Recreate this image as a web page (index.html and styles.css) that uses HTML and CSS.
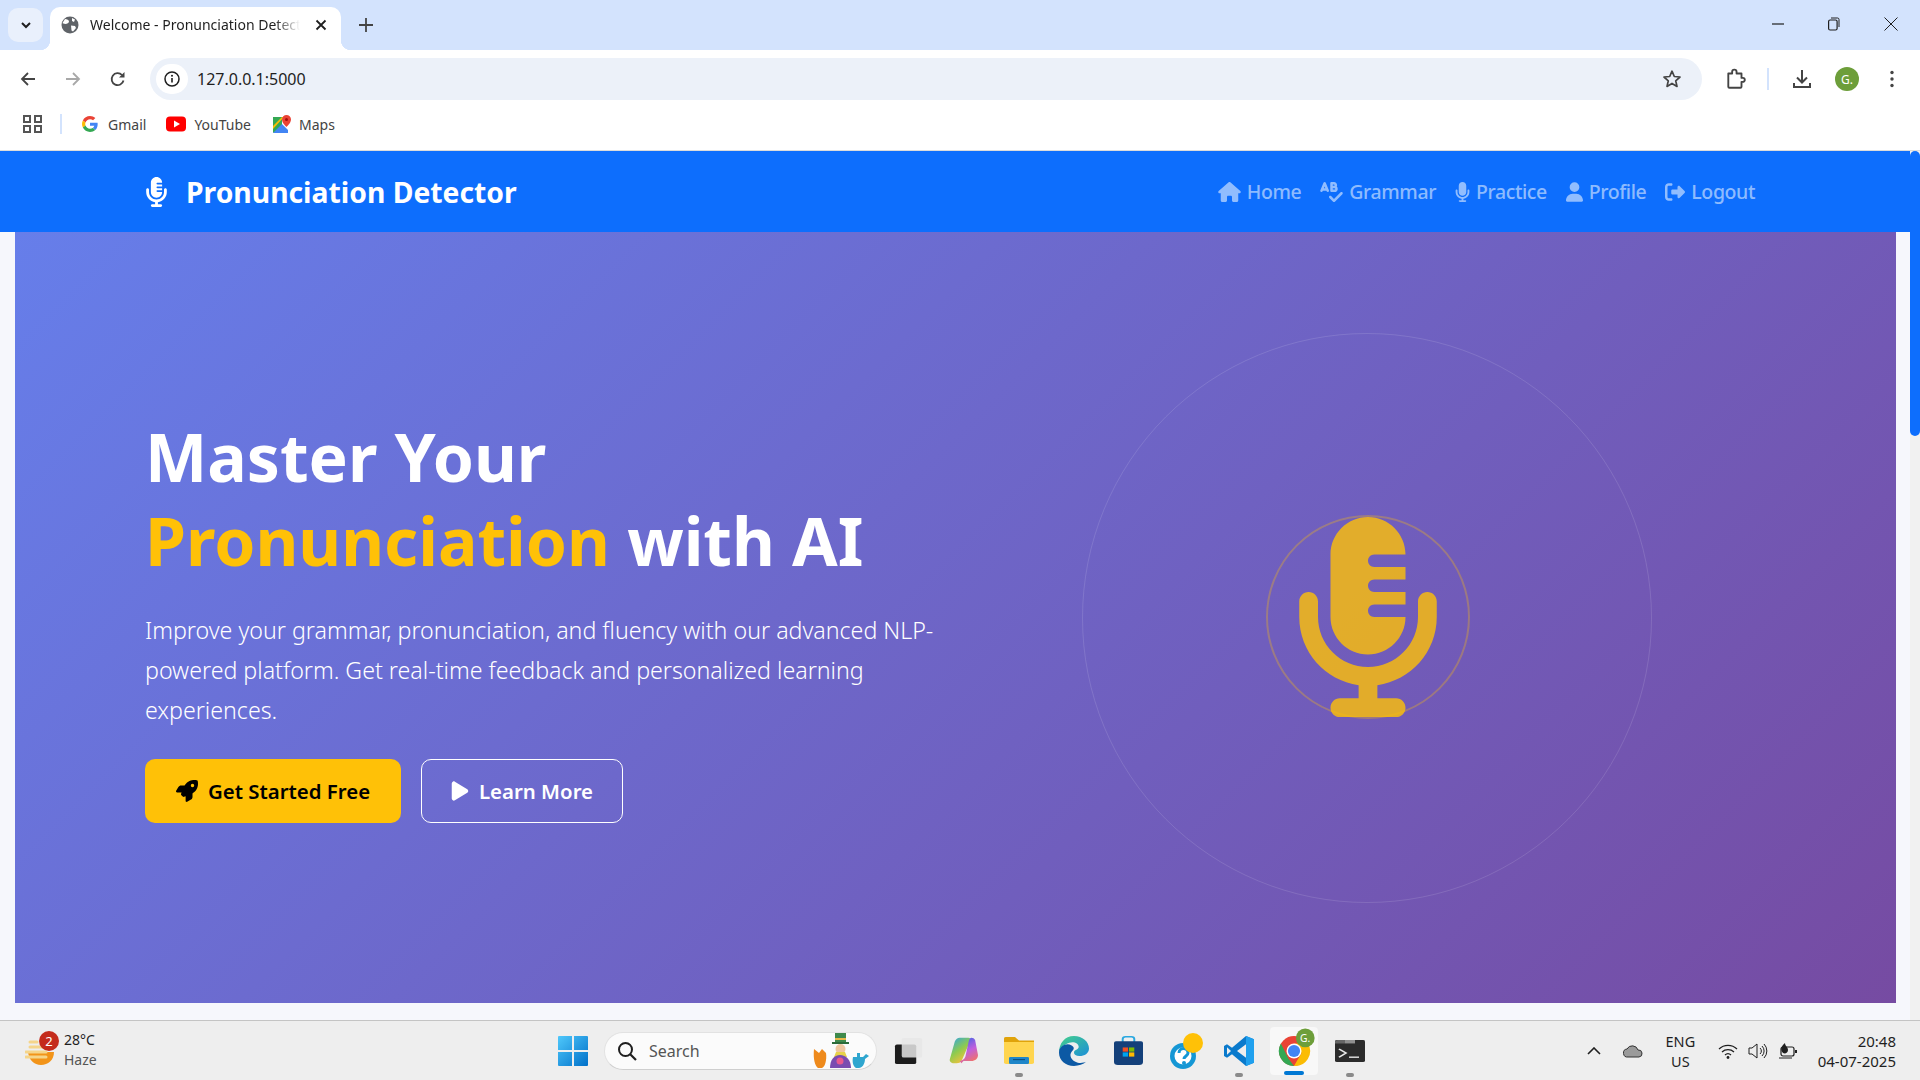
FILE: index.html
```html
<!DOCTYPE html>
<html lang="en">
<head>
<meta charset="utf-8">
<title>Welcome - Pronunciation Detector</title>
<link rel="stylesheet" href="styles.css">
</head>
<body>
<svg class="defs" aria-hidden="true">
  <symbol id="i-mic" viewBox="0 0 384 512"><path d="M96 96V256c0 53 43 96 96 96s96-43 96-96H208c-8.8 0-16-7.2-16-16s7.2-16 16-16h80V192H208c-8.8 0-16-7.2-16-16s7.2-16 16-16h80V128H208c-8.8 0-16-7.2-16-16s7.2-16 16-16h80c0-53-43-96-96-96S96 43 96 96zM320 240v16c0 70.7-57.3 128-128 128s-128-57.3-128-128V216c0-13.3-10.7-24-24-24s-24 10.7-24 24v40c0 89.1 66.2 162.7 152 174.4V464H120c-13.3 0-24 10.7-24 24s10.7 24 24 24h72 72c13.3 0 24-10.7 24-24s-10.7-24-24-24H216V430.4c85.8-11.7 152-85.3 152-174.4V216c0-13.3-10.7-24-24-24s-24 10.7-24 24v24z"/></symbol>
  <symbol id="i-mic2" viewBox="0 0 384 512"><path d="M192 0C139 0 96 43 96 96V256c0 53 43 96 96 96s96-43 96-96V96c0-53-43-96-96-96zM64 216c0-13.3-10.7-24-24-24s-24 10.7-24 24v40c0 89.1 66.2 162.7 152 174.4V464H120c-13.3 0-24 10.7-24 24s10.7 24 24 24h144c13.3 0 24-10.7 24-24s-10.7-24-24-24H216V430.4c85.8-11.7 152-85.3 152-174.4V216c0-13.3-10.7-24-24-24s-24 10.7-24 24v40c0 70.7-57.3 128-128 128S64 326.7 64 256V216z"/></symbol>
</svg>

<div class="window">
  <header class="tabstrip">
    <div class="tab-search"><svg width="14" height="14" viewBox="0 0 14 14"><path d="M3 5l4 4 4-4" fill="none" stroke="#1f1f1f" stroke-width="2"/></svg></div>
    <div class="tab">
      <svg class="tab-globe" width="18" height="18" viewBox="0 0 18 18"><circle cx="9" cy="9" r="8.500" fill="#5f6368"/><path d="M4 3c2 0 4 1 4 2.500S6 8 4.500 8 1.500 7 1.500 7zM10 9.500l4 .5 1 2-3 3.500-1.500-1zM11 2l3 1.500-1 2.500-2-1z" fill="#fff"/></svg>
      <span class="tab-title">Welcome - Pronunciation Detector</span>
      <svg class="tab-close" width="12" height="12" viewBox="0 0 12 12"><path d="M1.500 1.500l9 9M10.500 1.500l-9 9" stroke="#1f1f1f" stroke-width="1.800"/></svg>
    </div>
    <svg class="tab-new" width="14" height="14" viewBox="0 0 14 14"><path d="M7 0v14M0 7h14" stroke="#444" stroke-width="1.800"/></svg>
    <div class="win-controls">
      <svg width="12" height="12" viewBox="0 0 12 12"><path d="M0 6h12" stroke="#1f1f1f" stroke-width="1.200"/></svg>
      <svg width="12" height="14" viewBox="0 0 12 14"><rect x=".6" y="3" width="8.500" height="10" rx="1.500" fill="none" stroke="#1f1f1f" stroke-width="1.200"/><path d="M3 1h6.500a1.500 1.500 0 0 1 1.500 1.500V10" fill="none" stroke="#1f1f1f"/></svg>
      <svg width="14" height="14" viewBox="0 0 14 14"><path d="M.5.500l13 13M13.500.500l-13 13" stroke="#1f1f1f"/></svg>
    </div>
  </header>

  <div class="toolbar">
    <div class="nav-btns">
      <svg width="16" height="16" viewBox="0 0 16 16"><path d="M15 8H2M8 2L2 8l6 6" fill="none" stroke="#444" stroke-width="1.800"/></svg>
      <svg width="16" height="16" viewBox="0 0 16 16"><path d="M1 8h13M8 2l6 6-6 6" fill="none" stroke="#a8a8a8" stroke-width="1.800"/></svg>
      <svg width="16" height="16" viewBox="0 0 16 16"><path d="M13.500 9.500A6 6 0 1 1 12 4" fill="none" stroke="#444" stroke-width="1.800"/><path d="M14.500 1v5.500H9z" fill="#444"/></svg>
    </div>
    <div class="omnibox">
      <div class="site-info"><svg width="16" height="16" viewBox="0 0 16 16"><circle cx="8" cy="8" r="7" fill="none" stroke="#1f1f1f" stroke-width="1.500"/><path d="M8 7v4.500" stroke="#1f1f1f" stroke-width="1.600"/><circle cx="8" cy="4.800" r="1" fill="#1f1f1f"/></svg></div>
      <span class="url">127.0.0.1:5000</span>
      <svg class="star" width="20" height="20" viewBox="0 0 20 20"><path d="M10 2.200l2.300 5.300 5.700.5-4.300 3.800 1.300 5.600-5-3-5 3 1.300-5.600L2 8l5.700-.5z" fill="none" stroke="#444" stroke-width="1.700" stroke-linejoin="round"/></svg>
    </div>
    <div class="tool-icons">
      <svg class="t-puzzle" width="22" height="24" viewBox="0 0 20 20"><path d="M3 5h3.500V3.500a2 2 0 0 1 4 0V5H15v4h1.200a1.800 1.800 0 0 1 0 3.600H15V17a1 1 0 0 1-1 1H4a1 1 0 0 1-1-1z" fill="none" stroke="#444" stroke-width="1.700" stroke-linejoin="round"/></svg>
      <span class="t-sep"></span>
      <svg class="t-down" width="20" height="20" viewBox="0 0 20 20"><path d="M10 1v12M5 8.500l5 5 5-5" fill="none" stroke="#444" stroke-width="2"/><path d="M2 14v4h16v-4" fill="none" stroke="#444" stroke-width="2"/></svg>
      <span class="avatar">G.</span>
      <svg class="t-dots" width="4" height="18" viewBox="0 0 4 18"><circle cx="2" cy="2.500" r="1.700" fill="#444"/><circle cx="2" cy="9" r="1.700" fill="#444"/><circle cx="2" cy="15.500" r="1.700" fill="#444"/></svg>
    </div>
  </div>

  <div class="bookmarks">
    <svg class="apps" width="19" height="18" viewBox="0 0 19 18"><g fill="none" stroke="#555" stroke-width="2"><rect x="1" y="1" width="6" height="6"/><rect x="12" y="1" width="6" height="6"/><rect x="1" y="11" width="6" height="6"/><rect x="12" y="11" width="6" height="6"/></g></svg>
    <span class="bm-sep"></span>
    <div class="bm bm-g"><svg width="16" height="16" viewBox="0 0 48 48"><path fill="#EA4335" d="M24 9.500c3.500 0 6.700 1.200 9.200 3.600l6.900-6.900C35.900 2.400 30.500 0 24 0 14.600 0 6.500 5.400 2.600 13.200l8 6.200C12.500 13.700 17.800 9.500 24 9.500z"/><path fill="#4285F4" d="M47 24.500c0-1.600-.1-3.100-.4-4.500H24v9h12.900c-.6 3-2.200 5.500-4.700 7.200l7.700 6c4.500-4.200 7.100-10.300 7.100-17.700z"/><path fill="#FBBC05" d="M10.500 28.600c-.5-1.500-.8-3-.8-4.600s.3-3.100.8-4.600l-8-6.200C.9 16.500 0 20.100 0 24s.9 7.500 2.600 10.800z"/><path fill="#34A853" d="M24 48c6.500 0 11.900-2.100 15.900-5.800l-7.700-6c-2.200 1.400-4.900 2.300-8.200 2.300-6.200 0-11.500-4.200-13.400-9.900l-8 6.200C6.500 42.600 14.600 48 24 48z"/></svg><span>Gmail</span></div>
    <div class="bm bm-y"><svg width="20" height="16" viewBox="0 0 20 16"><rect width="20" height="15" y=".5" rx="4" fill="#f00"/><path d="M8 4.500v7l6-3.500z" fill="#fff"/></svg><span>YouTube</span></div>
    <div class="bm bm-m"><svg width="18" height="18" viewBox="0 0 18 18"><path d="M0 2h9v16H1a1 1 0 0 1-1-1z" fill="#34a853"/><path d="M0 18l9-9 6 6v3z" fill="#4285f4"/><path d="M0 11L9 2h2L0 14z" fill="#fbbc04"/><path d="M13.500 0a4.500 4.500 0 0 1 4.500 4.500C18 8 13.500 12 13.500 12S9 8 9 4.500A4.500 4.500 0 0 1 13.500 0z" fill="#ea4335"/><circle cx="13.500" cy="4.500" r="1.500" fill="#a50e0e"/></svg><span>Maps</span></div>
  </div>

  <div class="page-row">
    <div class="page">
      <nav class="navbar">
        <a class="brand"><svg class="brand-mic"><use href="#i-mic"/></svg><span>Pronunciation Detector</span></a>
        <ul class="nav-links">
          <li><svg class="ni ni-home" viewBox="0 0 576 512"><path d="M575.800 255.500c0 18-15 32.100-32 32.100h-32l.7 160.200c0 2.700-.2 5.400-.5 8.100V472c0 22.100-17.900 40-40 40H456c-1.100 0-2.200 0-3.300-.1c-1.400 .1-2.800 .1-4.200 .1H416 392c-22.100 0-40-17.900-40-40V448 384c0-17.700-14.300-32-32-32H256c-17.700 0-32 14.300-32 32v64 24c0 22.100-17.900 40-40 40H160 128.100c-1.500 0-3-.1-4.500-.2c-1.200 .1-2.400 .2-3.600 .2H104c-22.100 0-40-17.900-40-40V360c0-.9 0-1.900 .1-2.800V287.600H32c-18 0-32-14-32-32.100c0-9 3-17 10-24L266.400 8c7-7 15-8 22-8s15 2 21 7L564.800 231.500c8 7 12 15 11 24z"/></svg>Home</li>
          <li><svg class="ni ni-spell" viewBox="0 0 576 512"><path d="M112 0C99.100 0 87.400 7.800 82.500 19.700l-66.700 160-13.300 32c-6.800 16.300 .9 35 17.200 41.800s35-.9 41.800-17.200L66.700 224h90.700l5.100 12.300c6.800 16.300 25.500 24 41.800 17.200s24-25.500 17.200-41.800l-13.300-32-66.700-160C136.600 7.800 124.900 0 112 0zm18.700 160H93.300L112 115.200 130.700 160zM256 32v96 96c0 17.700 14.300 32 32 32h80c44.200 0 80-35.800 80-80c0-23.100-9.800-43.800-25.400-58.400c6-11.200 9.400-24 9.400-37.600c0-44.200-35.800-80-80-80H288c-17.700 0-32 14.300-32 32zm96 64H320V64h32c8.800 0 16 7.200 16 16s-7.200 16-16 16zm-32 64h32 16c8.800 0 16 7.200 16 16s-7.200 16-16 16H320V160zM566.600 310.600c12.500-12.500 12.500-32.800 0-45.300s-32.800-12.500-45.300 0L352 434.700l-73.400-73.400c-12.500-12.500-32.800-12.500-45.300 0s-12.500 32.800 0 45.300l96 96c12.500 12.500 32.800 12.500 45.300 0l192-192z"/></svg>Grammar</li>
          <li><svg class="ni ni-mic"><use href="#i-mic2"/></svg>Practice</li>
          <li><svg class="ni ni-user" viewBox="0 0 448 512"><path d="M224 256A128 128 0 1 0 224 0a128 128 0 1 0 0 256zm-45.700 48C79.800 304 0 383.800 0 482.300C0 498.700 13.300 512 29.700 512H418.300c16.400 0 29.700-13.300 29.700-29.700C448 383.800 368.200 304 269.700 304H178.300z"/></svg>Profile</li>
          <li><svg class="ni ni-out" viewBox="0 0 512 512"><path d="M377.900 105.900L500.700 228.700c7.200 7.200 11.300 17.100 11.300 27.300s-4.100 20.100-11.300 27.300L377.900 406.100c-6.400 6.400-15 9.900-24 9.900c-18.700 0-33.900-15.200-33.900-33.900l0-62.100-128 0c-17.700 0-32-14.300-32-32l0-64c0-17.700 14.300-32 32-32l128 0 0-62.100c0-18.700 15.200-33.900 33.900-33.900c9 0 17.600 3.600 24 9.900zM160 96L96 96c-17.700 0-32 14.300-32 32l0 256c0 17.700 14.300 32 32 32l64 0c17.700 0 32 14.300 32 32s-14.300 32-32 32l-64 0c-53 0-96-43-96-96L0 128C0 75 43 32 96 32l64 0c17.700 0 32 14.300 32 32s-14.300 32-32 32z"/></svg>Logout</li>
        </ul>
      </nav>
      <main class="main">
        <section class="hero">
          <div class="hero-copy">
            <h1>Master Your<br><span class="accent">Pronunciation</span> with AI</h1>
            <p>Improve your grammar, pronunciation, and fluency with our advanced NLP-powered platform. Get real-time feedback and personalized learning experiences.</p>
            <div class="cta">
              <a class="btn btn-primary"><svg class="btn-ic" viewBox="0 0 512 512"><path d="M156.600 384.900L125.700 354c-8.500-8.500-11.500-20.800-7.700-32.200c3-8.900 7-20.500 11.800-33.800L24 288c-8.600 0-16.600-4.600-20.900-12.100s-4.200-16.700 .2-24.100l52.500-88.500c13-21.900 36.500-35.300 61.900-35.300l82.300 0c2.400-4 4.800-7.700 7.200-11.300C289.100-4.100 411.100-8.100 483.900 5.300c11.600 2.100 20.600 11.200 22.800 22.800c13.400 72.900 9.300 194.800-111.400 276.700c-3.500 2.400-7.300 4.800-11.300 7.200v82.300c0 25.400-13.400 49-35.300 61.900l-88.500 52.500c-7.400 4.400-16.600 4.500-24.100 .2s-12.100-12.200-12.100-20.900V380.800c-14.100 4.900-26.400 8.900-35.700 11.900c-11.200 3.600-23.400 .5-31.800-7.800zM384 168a40 40 0 1 0 0-80 40 40 0 1 0 0 80z"/></svg>Get Started Free</a>
              <a class="btn btn-outline"><svg class="btn-ic btn-ic-play" viewBox="0 0 384 512"><path d="M73 39c-14.800-9.100-33.400-9.400-48.500-.9S0 62.600 0 80V432c0 17.400 9.400 33.400 24.500 41.900s33.700 8.100 48.500-.9L361 297c14.300-8.700 23-24.200 23-41s-8.700-32.200-23-41L73 39z"/></svg>Learn More</a>
            </div>
          </div>
          <div class="hero-art">
            <div class="ring ring-big"></div>
            <div class="ring ring-small"></div>
            <svg class="art-mic"><use href="#i-mic"/></svg>
          </div>
        </section>
      </main>
    </div>
    <div class="scroll-track"><div class="scroll-thumb"></div></div>
  </div>

  <footer class="taskbar">
    <div class="weather">
      <div class="weather-icon">
        <svg width="30" height="30" viewBox="0 0 30 30"><path d="M3 16h26c0 8-6 13-13 13S4 24 3 16z" fill="#f29419"/><path d="M5 6h7M5 11h12M1 16h20M1 21h20" stroke="#f5d58a" stroke-width="3" stroke-linecap="round"/></svg>
        <span class="badge">2</span>
      </div>
      <div class="weather-text"><span>28°C</span><span class="muted">Haze</span></div>
    </div>
    <svg class="win-logo" width="30" height="30" viewBox="0 0 30 30"><defs><linearGradient id="w" x1="0" y1="0" x2="1" y2="1"><stop offset="0" stop-color="#4fc8fb"/><stop offset="1" stop-color="#0070c9"/></linearGradient></defs><path d="M1 0h13v14H0V1a1 1 0 0 1 1-1zM16 0h13a1 1 0 0 1 1 1v13H16zM0 16h14v14H1a1 1 0 0 1-1-1zM16 16h14v13a1 1 0 0 1-1 1H16z" fill="url(#w)"/></svg>
    <div class="search">
      <svg width="20" height="20" viewBox="0 0 20 20"><circle cx="8.500" cy="8.500" r="6.500" fill="none" stroke="#1f1f1f" stroke-width="2"/><path d="M13 13l6 6" stroke="#1f1f1f" stroke-width="2.200"/></svg>
      <span>Search</span>
      <svg class="doodle" width="56" height="36" viewBox="0 0 56 36"><path d="M1 16l5 4 3-4 4 4c1 7-1 14-4 15H5c-3-2-5-9-4-19z" fill="#ee8a1c"/><path d="M22 0h11v9H22z" fill="#3f8a4c"/><path d="M22 5h11v2H22z" fill="#e8b84a"/><path d="M19 9h17v2H19z" fill="#2d6b3a"/><circle cx="27.500" cy="16" r="5" fill="#f0c7a0"/><path d="M23 19l-2 5h13l-2-5z" fill="#e8d24a"/><path d="M17 35c0-8 4-13 10-13s11 5 11 13z" fill="#7a4bb0"/><circle cx="27" cy="28" r="3.500" fill="#e8598f"/><path d="M40 24h10l3-3 3 2-4 3c0 5-3 9-6 9h-3c-3-2-4-6-3-11z" fill="#2fa6cf"/><path d="M44 20h3v4h-3z" fill="#2fa6cf"/></svg>
    </div>
    <div class="apps-row">
      <div class="task"><svg width="29" height="28" viewBox="0 0 30 30" preserveAspectRatio="none"><rect x="1" y="8" width="22" height="21" rx="2" fill="#1c1c1c"/><rect x="8" y="1" width="21" height="21" rx="2" fill="#e6e6e6" fill-opacity=".85"/></svg></div>
      <div class="task"><svg width="29" height="27" viewBox="0 0 30 36" preserveAspectRatio="none"><defs><linearGradient id="cp" x1="0" y1="0" x2=".6" y2="1"><stop offset="0" stop-color="#2aa3ee"/><stop offset=".55" stop-color="#8ecb4e"/><stop offset="1" stop-color="#f6c13c"/></linearGradient><linearGradient id="cp2" x1=".3" y1="0" x2=".7" y2="1"><stop offset="0" stop-color="#4463e6"/><stop offset=".5" stop-color="#c060dc"/><stop offset="1" stop-color="#f6745c"/></linearGradient></defs><path d="M11 1h9c2 0 3 2 2 4l-9 27c-1 2-3 3-5 3H5c-3 0-5-3-4-6L6 6c1-3 3-5 5-5z" fill="url(#cp)"/><path d="M23 1c2 0 3 1 4 3l3 20c0 5-3 8-7 8h-8c-2 3-3 4-2 3l-2-3c4-1 5-3 6-6l3-18c.5-4 1.500-7 3-7z" fill="url(#cp2)"/></svg></div>
      <div class="task task-open"><svg width="30" height="27" viewBox="0 0 30 38" preserveAspectRatio="none"><path d="M0 2a2 2 0 0 1 2-2h9l4 5h15v10H0z" fill="#e0a30a"/><path d="M0 7h30v29a2 2 0 0 1-2 2H2a2 2 0 0 1-2-2z" fill="#ffd54f"/><rect x="5" y="28" width="20" height="10" rx="1.500" fill="#1f86c9"/><rect x="9" y="31" width="12" height="1.600" fill="#0d4f80"/></svg></div>
      <div class="task"><svg width="30" height="30" viewBox="0 0 32 36" preserveAspectRatio="none"><defs><linearGradient id="ed" x1="0" y1="0" x2="1" y2="1"><stop offset="0" stop-color="#45d08a"/><stop offset="1" stop-color="#1c8fd8"/></linearGradient></defs><path d="M16 0c9 0 16 7 16 15 0 6-5 9-10 9-4 0-6-2-6-4 0-4 5-3 5-7 0-4-5-7-10-5C5 10 1 15 0 20 0 9 6 0 16 0z" fill="url(#ed)"/><path d="M0 20c0-8 8-12 13-9 4 2 3 5 1 7-4 5-1 12 6 14 3 1 7 0 9-1-3 3-8 5-13 5C7 36 0 29 0 20z" fill="#0c59a4"/></svg></div>
      <div class="task"><svg width="29" height="29" viewBox="0 0 30 38" preserveAspectRatio="none"><path d="M9 8V4a3 3 0 0 1 3-3h6a3 3 0 0 1 3 3v4" fill="none" stroke="#29a8e0" stroke-width="2"/><path d="M0 9a2 2 0 0 1 2-2h26a2 2 0 0 1 2 2v25a4 4 0 0 1-4 4H4a4 4 0 0 1-4-4z" fill="#14407a"/><rect x="9" y="15" width="5.500" height="5.500" fill="#f25022"/><rect x="15.500" y="15" width="5.500" height="5.500" fill="#7fba00"/><rect x="9" y="21.500" width="5.500" height="5.500" fill="#00a4ef"/><rect x="15.500" y="21.500" width="5.500" height="5.500" fill="#ffb900"/></svg></div>
      <div class="task task-help"><svg class="ic-over" width="34" height="36" viewBox="0 0 34 36"><circle cx="14" cy="23" r="13" fill="#1597d5"/><circle cx="14" cy="23" r="8.500" fill="#fff"/><path d="M10 20c0-6 9-6 9 0 0 3-4 3-4 6" fill="none" stroke="#1597d5" stroke-width="3"/><circle cx="15" cy="30" r="2" fill="#1597d5"/><circle cx="24" cy="10" r="10" fill="#ffc107"/></svg></div>
      <div class="task task-open"><svg width="30" height="30" viewBox="0 0 30 36" preserveAspectRatio="none"><path d="M22 0l8 4v28l-8 4L8 22l-5 4-3-2v-12l3-2 5 4z" fill="#0a7acc"/><path d="M22 0l8 4v28l-8 4z" fill="#1fa0ee"/><path d="M22 10L13 18l9 8z" fill="#eeeeee"/><path d="M3 13.500L7 18l-4 4.500z" fill="#eeeeee"/></svg></div>
      <div class="task task-active"><svg class="ic-over" width="30" height="30" viewBox="0 0 32 32"><circle cx="16" cy="16" r="16" fill="#ea4335"/><path d="M2 8l8 16 6 8A16 16 0 0 1 2 8z" fill="#34a853"/><path d="M16 8h15a16 16 0 0 1-15 24l8-14z" fill="#fbbc04"/><circle cx="16" cy="16" r="8" fill="#fff"/><circle cx="16" cy="16" r="6.500" fill="#4285f4"/><circle cx="28" cy="2" r="10" fill="#6d9e3a"/><text x="28" y="6" class="mini-g">G.</text></svg></div>
      <div class="task task-open"><svg width="30" height="22" viewBox="0 0 30 32" preserveAspectRatio="none"><rect width="30" height="32" rx="2" fill="#2b2b2b"/><rect x="10" width="10" height="5" fill="#8f8f8f"/><path d="M3 0h7v5H0V3a3 3 0 0 1 3-3z" fill="#666"/><path d="M4 13l7 6-7 6" fill="none" stroke="#e8e8e8" stroke-width="2"/><rect x="14" y="24" width="10" height="2" fill="#e8e8e8"/></svg></div>
    </div>
    <div class="tray">
      <svg width="14" height="8" viewBox="0 0 14 8"><path d="M1 7l6-6 6 6" fill="none" stroke="#1f1f1f" stroke-width="1.600"/></svg>
      <svg class="tray-cloud" width="20" height="14" viewBox="0 0 20 14"><path d="M5 13a4 4 0 0 1-1-8 6 6 0 0 1 11 1 3.500 3.500 0 0 1 1 7z" fill="#9a9a9a" stroke="#333"/></svg>
      <div class="lang"><span>ENG</span><span>US</span></div>
      <svg class="tray-wifi" width="20" height="16" viewBox="0 0 20 16"><path d="M1 6a13 13 0 0 1 18 0M4 9a9 9 0 0 1 12 0M7 12a4.500 4.500 0 0 1 6 0" fill="none" stroke="#1f1f1f" stroke-width="1.300"/><circle cx="10" cy="14.500" r="1.400" fill="#1f1f1f"/></svg>
      <svg width="20" height="16" viewBox="0 0 20 16"><path d="M1 5h3l5-4v14l-5-4H1z" fill="none" stroke="#1f1f1f"/><path d="M12 5a4 4 0 0 1 0 6M14 3a7 7 0 0 1 0 10M16 1a10 10 0 0 1 0 14" fill="none" stroke="#1f1f1f"/></svg>
      <svg width="20" height="16" viewBox="0 0 20 16"><rect x="3" y="4" width="13" height="9" rx="2" fill="none" stroke="#1f1f1f" stroke-width="1.200"/><rect x="17" y="7" width="2" height="3" fill="#1f1f1f"/><path d="M7 0C3 3 2 7 5 10c2 1 5 0 5-3 0-3-3-4-3-7z" fill="#1f1f1f"/><path d="M1 15h13" stroke="#1f1f1f"/></svg>
      <div class="clock"><span>20:48</span><span>04-07-2025</span></div>
    </div>
  </footer>
</div>
</body>
</html>
```

FILE: styles.css
```css
* { box-sizing: border-box; }
html, body { margin: 0; height: 100%; overflow: hidden; }
body { font-family: "Noto Sans", "Open Sans", sans-serif; color: #1f1f1f; }
.defs { position: absolute; width: 0; height: 0; }
.window { display: flex; flex-direction: column; height: 1080px; width: 1920px; }

/* tab strip */
.tabstrip { height: 50px; background: #d3e3fd; display: flex; align-items: flex-start; padding-left: 8px; flex: none; }
.tab-search { width: 35px; height: 34px; margin-top: 8px; border-radius: 10px; background: #e9f0fc; display: flex; align-items: center; justify-content: center; }
.tab { position: relative; width: 291px; height: 43px; margin: 7px 0 0 7px; padding: 0 14px 7px 11px; background: #fff; border-radius: 10px 10px 0 0; display: flex; align-items: center; }
.tab::before, .tab::after { content: ""; position: absolute; bottom: 0; width: 10px; height: 10px; }
.tab::before { left: -10px; background: radial-gradient(circle at 0 0, #d3e3fd 10px, #fff 10.5px); }
.tab::after { right: -10px; background: radial-gradient(circle at 100% 0, #d3e3fd 10px, #fff 10.5px); }
.tab-globe { flex: none; }
.tab-title { margin-left: 11px; width: 210px; flex: none; font-size: 14px; line-height: 24px; white-space: nowrap; overflow: hidden; -webkit-mask-image: linear-gradient(90deg, #000 88%, transparent); mask-image: linear-gradient(90deg, #000 88%, transparent); }
.tab-close { margin-left: 15px; flex: none; }
.tab-new { margin: 18px 0 0 18px; }
.win-controls { margin-left: auto; margin-top: 18px; padding-right: 22px; display: flex; gap: 44px; align-items: center; height: 12px; }

/* toolbar */
.toolbar { height: 50px; background: #fff; border-radius: 8px 8px 0 0; display: flex; align-items: center; flex: none; padding-left: 20px; }
.nav-btns { display: flex; gap: 29px; width: 130px; margin-top: 8px; }
.omnibox { width: 1552px; height: 42px; margin-top: 8px; border-radius: 21px; background: #ecf1f9; display: flex; align-items: center; padding: 0 20px 0 6px; }
.site-info { width: 32px; height: 30px; border-radius: 15px; background: #fff; display: flex; align-items: center; justify-content: center; }
.url { margin-left: 9px; font-size: 16px; }
.star { margin-left: auto; }
.tool-icons { display: flex; align-items: center; padding-left: 23px; margin-top: 8px; }
.t-sep { width: 2px; height: 22px; background: #d3e3fd; margin: 0 23px 0 20px; }
.avatar { width: 24px; height: 24px; margin-left: 23px; border-radius: 50%; background: #6d9e3a; color: #fff; font-size: 12px; display: flex; align-items: center; justify-content: center; }
.t-dots { margin-left: 31px; }

/* bookmarks */
.bookmarks { height: 51px; background: #fff; border-bottom: 1px solid #dcdcdc; display: flex; align-items: center; padding: 0 0 2px 23px; flex: none; font-size: 14px; color: #444; }
.bm-sep { width: 2px; height: 20px; background: #d3e3fd; margin: 0 20px 0 18px; }
.bm { display: flex; align-items: center; gap: 10px; }
.bm-y { margin-left: 20px; gap: 8px; }
.bm-m { margin-left: 22px; gap: 8px; }

/* page */
.page-row { flex: 1; display: flex; min-height: 0; background: #f0f0f0; }
.page { width: 1910px; display: flex; flex-direction: column; background: #f6f7fc; }
.scroll-track { width: 10px; background: #f1f1f1; }
.scroll-thumb { height: 285px; background: #0d6efd; border-radius: 5px; }

.navbar { height: 81px; background: #0d6efd; display: flex; align-items: center; justify-content: space-between; padding: 0 155px 0 145px; flex: none; }
.brand { display: flex; align-items: center; color: #fff; font-size: 28.300px; font-weight: 700; }
.brand-mic { width: 23px; height: 30px; fill: #fff; margin-right: 18px; }
.nav-links { list-style: none; margin: 0; padding: 0; display: flex; gap: 19px; font-size: 19.500px; font-weight: 500; letter-spacing: -.4px; color: rgba(255, 255, 255, .55); }
.nav-links li { display: flex; align-items: center; gap: 6px; }
.ni { height: 20px; fill: rgba(255, 255, 255, .55); }
.ni-home { width: 23px; }
.ni-spell { width: 23px; }
.ni-mic { width: 15px; }
.ni-user { width: 17px; }
.ni-out { width: 20px; }

.main { flex: 1; padding: 0 14px 17px 15px; min-height: 0; }
.hero { height: 771px; background: linear-gradient(135deg, #667eea 0%, #764ba2 100%); display: grid; grid-template-columns: 800px 844px; padding: 0 106px 0 130px; align-items: center; color: #fff; }
.hero-copy { padding-top: 3px; }
.hero-copy h1 { margin: 0 0 28px; font-size: 66px; line-height: 83.200px; font-weight: 700; }
.accent { color: #ffc107; }
.hero-copy p { margin: 0 0 29px; font-size: 23.200px; line-height: 40px; font-weight: 300; }
.cta { display: flex; gap: 20px; }
.btn { height: 64px; display: flex; align-items: center; justify-content: center; border-radius: 10px; font-size: 20.400px; font-weight: 600; gap: 10px; }
.btn-primary { width: 256px; background: #ffc107; color: #000; }
.btn-outline { width: 202px; border: 1px solid #fff; color: #fff; }
.btn-ic { width: 22px; height: 22px; fill: currentColor; }
.btn-ic-play { width: 18px; }

.hero-art { display: grid; place-items: center; height: 570px; }
.hero-art > * { grid-area: 1 / 1; }
.ring { border-radius: 50%; }
.ring-big { width: 570px; height: 570px; border: 1px solid rgba(255, 255, 255, .12); }
.ring-small { width: 204px; height: 204px; border: 2px solid rgba(255, 193, 7, .3); margin: 0 0 2px 2px; }
.art-mic { width: 150px; height: 200px; fill: #ffc107; opacity: .8; margin: 0 0 2px 2px; }

/* taskbar */
.taskbar { height: 60px; flex: none; background: #eeeeee; border-top: 1px solid #c4c4c4; display: flex; align-items: center; font-size: 14px; position: relative; }
.weather { width: 558px; padding-left: 25px; display: flex; align-items: center; gap: 9px; }
.weather-icon { position: relative; width: 30px; height: 30px; }
.badge { position: absolute; left: 14px; top: -5px; width: 20px; height: 20px; border-radius: 50%; background: #c42b1c; color: #fff; font-size: 13px; display: flex; align-items: center; justify-content: center; }
.weather-text { display: flex; flex-direction: column; line-height: 20px; margin-top: -1px; }
.muted { color: #555; }
.search { width: 273px; height: 38px; margin-left: 16px; border-radius: 19px; background: #fbfbfb; border: 1px solid #e2e2e2; border-bottom-color: #cfcfcf; display: flex; align-items: center; padding-left: 12px; font-size: 16px; color: #555; }
.search span { margin-left: 12px; }
.doodle { margin-left: auto; margin-right: 7px; }
.apps-row { display: flex; align-items: center; margin-left: 4px; height: 100%; }
.task { position: relative; width: 55px; height: 48px; display: flex; align-items: center; justify-content: center; }
.task-help svg { margin-left: 5px; }
.ic-over { overflow: visible; }
.task-open::after { content: ""; position: absolute; left: 50%; bottom: -2px; width: 8px; height: 4px; margin-left: -4px; border-radius: 2px; background: #8a8a8a; }
.task-active { background: #f8f8f8; border-radius: 4px; width: 48px; margin: 0 4px; }
.task-active::after { content: ""; position: absolute; left: 50%; bottom: 0; width: 20px; height: 4px; margin-left: -10px; border-radius: 2px; background: #0078d4; }
.mini-g { font-family: "Noto Sans", sans-serif; font-size: 11px; fill: #fff; text-anchor: middle; }
.tray { margin-left: auto; padding-right: 24px; display: flex; align-items: center; gap: 10px; }
.tray-cloud { margin-left: 12px; }
.lang { display: flex; flex-direction: column; align-items: center; line-height: 20px; margin: 0 12.500px 0 13px; font-size: 14.500px; }
.clock { display: flex; flex-direction: column; align-items: flex-end; line-height: 20px; margin-left: 10px; font-size: 15px; }
```
